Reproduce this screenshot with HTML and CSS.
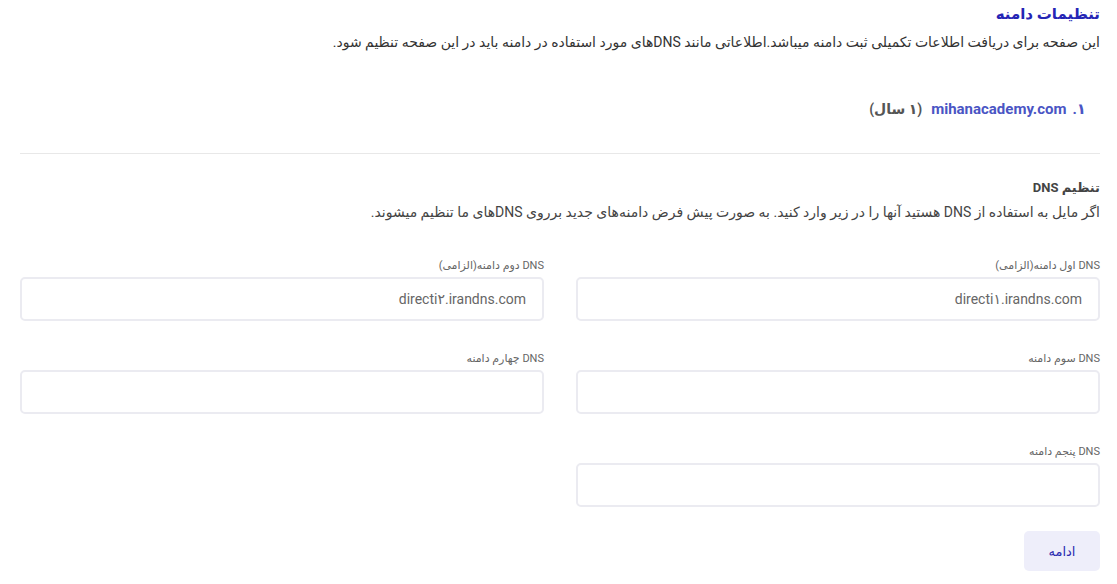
FILE: index.html
```html
<!DOCTYPE html>
<html lang="fa" dir="rtl">
<head>
<meta charset="utf-8">
<title>تنظیمات دامنه</title>
<link rel="stylesheet" href="styles.css">
</head>
<body>
<main class="page">
  <h1 class="title">تنظیمات دامنه</h1>
  <p class="desc">این صفحه برای دریافت اطلاعات تکمیلی ثبت دامنه میباشد.اطلاعاتی مانند DNSهای مورد استفاده در دامنه باید در این صفحه تنظیم شود.</p>

  <div class="domain">
    <span class="num">۱.</span>
    <span class="name">mihanacademy.com</span>
    <span class="period">(۱ سال)</span>
  </div>

  <hr class="divider">

  <h2 class="sub">تنظیم DNS</h2>
  <p class="desc2">اگر مایل به استفاده از DNS هستید آنها را در زیر وارد کنید. به صورت پیش فرض دامنه‌های جدید برروی DNSهای ما تنظیم میشوند.</p>

  <form class="grid">
    <label class="field">
      <span class="label">DNS اول دامنه(الزامی)</span>
      <input class="input" type="text" value="directi۱.irandns.com">
    </label>
    <label class="field">
      <span class="label">DNS دوم دامنه(الزامی)</span>
      <input class="input" type="text" value="directi۲.irandns.com">
    </label>
    <label class="field">
      <span class="label">DNS سوم دامنه</span>
      <input class="input" type="text">
    </label>
    <label class="field">
      <span class="label">DNS چهارم دامنه</span>
      <input class="input" type="text">
    </label>
    <label class="field">
      <span class="label">DNS پنجم دامنه</span>
      <input class="input" type="text">
    </label>
  </form>

  <div class="actions">
    <button class="btn" type="button">ادامه</button>
  </div>
</main>
</body>
</html>
```

FILE: styles.css
```css
* { box-sizing: border-box; }
html, body { margin: 0; padding: 0; background: #fff; }
body {
  font-family: Roboto, "DejaVu Sans", "Noto Sans", sans-serif;
  color: #333;
}
.page {
  padding: 4px 17px 0 17px;
}
.title {
  margin: 0;
  font-size: 15px;
  font-weight: 700;
  color: #2525b5;
  line-height: 20px;
}
.desc {
  margin: 8px 0 0;
  font-size: 14px;
  line-height: 20px;
  color: #333;
}
.domain {
  margin-top: 46px;
  display: flex;
  align-items: center;
  gap: 6px;
  padding-right: 14px;
  font-size: 15px;
  font-weight: 700;
  line-height: 22px;
}
.num, .name { color: #4a55c4; }
.period { color: #555; margin-right: 3px; font-size: 14px; }
.divider {
  margin: 33px 0 0 0;
  border: 0;
  border-top: 1px solid #e8e8e8;
  width: calc(100% - 3px);
}
.sub {
  margin: 25px 0 0;
  font-size: 13px;
  font-weight: 700;
  color: #444;
  line-height: 18px;
}
.desc2 {
  margin: 6px 0 0;
  font-size: 14px;
  line-height: 18px;
  color: #444;
}
.grid {
  margin-top: 38px;
  display: grid;
  grid-template-columns: 1fr 1fr;
  column-gap: 32px;
  row-gap: 31px;
  width: 1080px;
}
.field {
  display: flex;
  flex-direction: column;
  gap: 4px;
}
.label {
  font-size: 11px;
  line-height: 14px;
  color: #666;
}
.input {
  height: 44px;
  border: 2px solid #ebebf1;
  border-radius: 5px;
  padding: 0 16px;
  font-family: Roboto, "DejaVu Sans", sans-serif;
  font-size: 14px;
  color: #666;
  background: #fff;
  direction: rtl;
  outline: none;
}
.actions {
  margin-top: 24px;
  display: flex;
}
.btn {
  width: 76px;
  height: 40px;
  border: 0;
  border-radius: 5px;
  background: #eeeefa;
  color: #2a2ab0;
  font-family: Roboto, "DejaVu Sans", sans-serif;
  font-size: 13px;
}
```
